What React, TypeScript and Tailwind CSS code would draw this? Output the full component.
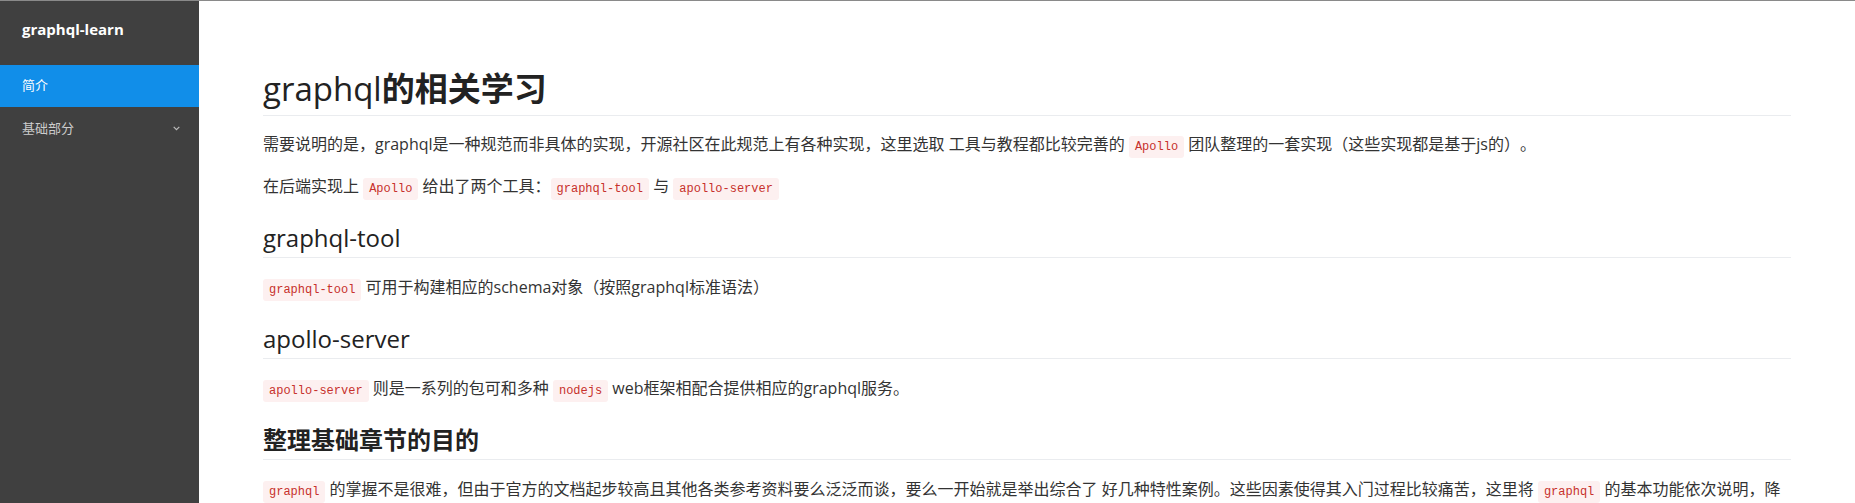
import React from "react";

function Code({ children }: { children: React.ReactNode }) {
  return (
    <code className="rounded-[3px] bg-[#fdf0f0] px-[6px] py-[4px] font-['Liberation_Mono',monospace] text-[12px] leading-none text-[#c7302c]">
      {children}
    </code>
  );
}

function Sidebar() {
  return (
    <aside className="w-[199px] shrink-0 bg-[#404040] text-white">
      <div className="flex h-16 items-center pb-2 pl-[22px] text-[15px] font-bold">graphql-learn</div>
      <ul className="text-[13px]">
        <li className="flex h-[42px] items-center bg-[#118ee9] pl-[22px] text-white">简介</li>
        <li className="flex h-[43px] items-center justify-between pl-[22px] pr-[19px] text-[#cccccc]">
          <span>基础部分</span>
          <svg width="7" height="5" viewBox="0 0 7 5" fill="none">
            <path d="M0.7 0.8 L3.5 3.6 L6.3 0.8" stroke="#bbbbbb" strokeWidth="1.2" />
          </svg>
        </li>
      </ul>
    </aside>
  );
}

export default function App() {
  return (
    <div className="flex min-h-screen border-t border-[#8a8a8a] bg-white font-['Open_Sans','Noto_Sans_CJK_SC',sans-serif] text-[#333] [text-spacing-trim:space-all]">
      <Sidebar />

      <main className="flex-1 px-16 pt-[68px] pb-10">
        <h1 className="mb-[15px] border-b border-[#eaecef] pb-[6px] text-[33px] leading-[40px] text-[#222]">
          graphql<span className="font-bold">的相关学习</span>
        </h1>

        <p className="mb-4 text-[16px] leading-[26px]">
          需要说明的是，graphql是一种规范而非具体的实现，开源社区在此规范上有各种实现，这里选取 工具与教程都比较完善的 <Code>Apollo</Code> 团队整理的一套实现（这些实现都是基于js的）。
        </p>
        <p className="mb-4 text-[16px] leading-[26px]">
          在后端实现上 <Code>Apollo</Code> 给出了两个工具：<Code>graphql-tool</Code> 与 <Code>apollo-server</Code>
        </p>

        <h2 className="mt-6 mb-4 border-b border-[#eaecef] pb-1 text-[24px] leading-[30px] font-medium text-[#222]">graphql-tool</h2>
        <p className="mb-4 text-[16px] leading-[26px]">
          <Code>graphql-tool</Code> 可用于构建相应的schema对象（按照graphql标准语法）
        </p>

        <h2 className="mt-6 mb-4 border-b border-[#eaecef] pb-1 text-[24px] leading-[30px] font-medium text-[#222]">apollo-server</h2>
        <p className="mb-4 text-[16px] leading-[26px]">
          <Code>apollo-server</Code> 则是一系列的包可和多种 <Code>nodejs</Code> web框架相配合提供相应的graphql服务。
        </p>

        <h2 className="mt-6 mb-4 border-b border-[#eaecef] pb-1 text-[24px] leading-[30px] font-bold text-[#222]">整理基础章节的目的</h2>
        <p className="mb-4 text-[16px] leading-[26px]">
          <Code>graphql</Code> 的掌握不是很难，但由于官方的文档起步较高且其他各类参考资料要么泛泛而谈，要么一开始就是举出综合了 好几种特性案例。这些因素使得其入门过程比较痛苦，这里将 <Code>graphql</Code> 的基本功能依次说明，降低入门的难度。
        </p>
      </main>
    </div>
  );
}
